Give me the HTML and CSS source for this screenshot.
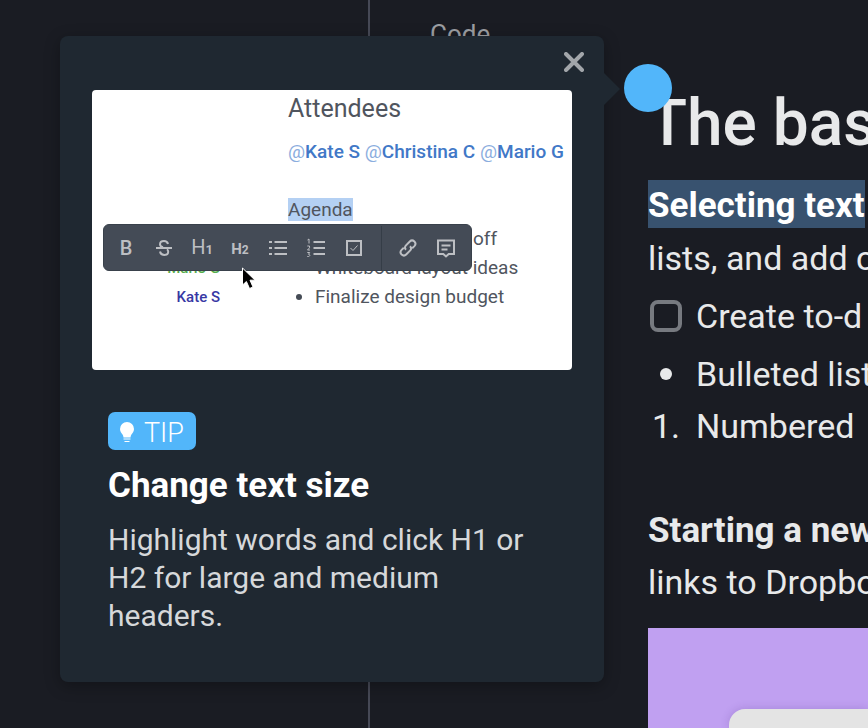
FILE: index.html
```html
<!DOCTYPE html>
<html lang="en">
<head>
<meta charset="utf-8">
<title>The basics</title>
<link rel="stylesheet" href="styles.css">
</head>
<body>
<div class="app">
  <aside class="sidebar"></aside>
  <nav class="outline"><a class="outline-link" href="#code">Code</a></nav>
  <main class="doc">
    <h1 class="doc-title">The bas</h1>
    <p class="line"><strong class="selected">Selecting text</strong></p>
    <p class="line">lists, and add c</p>
    <label class="line todo"><input class="todo-box" type="checkbox"><span>Create to-d</span></label>
    <ul class="items">
      <li class="line item"><span class="marker"><span class="dot"></span></span>Bulleted list</li>
    </ul>
    <ol class="items">
      <li class="line item"><span class="marker">1.</span>Numbered</li>
    </ol>
    <p class="line section"><strong>Starting a new</strong></p>
    <p class="line">links to Dropbo</p>
    <div class="figure"><div class="figure-panel"></div></div>
  </main>
</div>

<section class="popover" aria-labelledby="tip-title">
  <button class="close" type="button" aria-label="Close">
    <svg width="20" height="20" viewBox="0 0 20 20"><path d="M2 2L18 18M18 2L2 18"/></svg>
  </button>
  <div class="preview">
    <div class="authors">
      <span class="author green">Mario G</span>
      <span class="author">Kate S</span>
    </div>
    <div class="note">
      <h3 class="note-title">Attendees</h3>
      <p class="mentions"><i>@</i>Kate S <i>@</i>Christina C <i>@</i>Mario G</p>
      <p class="agenda"><mark>Agenda</mark></p>
      <ul class="note-list">
        <li class="behind">off</li>
        <li>Whiteboard layout ideas</li>
        <li>Finalize design budget</li>
      </ul>
    </div>
    <div class="toolbar">
      <button class="tool bold" type="button">B</button>
      <button class="tool" type="button" aria-label="Strikethrough">
        <svg viewBox="0 0 20 20"><path d="M2 10H18M14 6C13.500 4 12 3 10 3C7.500 3 6 4.500 6 6.300C6 8 7.300 8.800 9 9.300M6 13.500C6.500 15.800 8 17 10.200 17C12.700 17 14.200 15.600 14.200 13.800C14.200 12.600 13.700 11.800 13 11.300"/></svg>
      </button>
      <button class="tool" type="button">H<small>1</small></button>
      <button class="tool h2" type="button">H<small>2</small></button>
      <button class="tool" type="button" aria-label="Bulleted list">
        <svg viewBox="0 0 20 20"><path d="M6.500 4H19M6.500 10H19M6.500 16H19M1 4H4M1 10H4M1 16H4"/></svg>
      </button>
      <button class="tool" type="button" aria-label="Numbered list">
        <svg viewBox="0 0 20 20"><path d="M7.500 4H19M7.500 10H19M7.500 16H19"/><path class="fine" d="M1.500 2L3 1V5.500M1.300 8H3.500V9.800L1.500 12H4M1.300 14.500H3.700L2.500 16.300C4.500 16.300 4.300 19 1.300 18.500"/></svg>
      </button>
      <button class="tool" type="button" aria-label="To-do">
        <svg viewBox="0 0 20 20"><path d="M3 3H17V17H3Z"/><path class="fine" d="M6.500 10L9 12.500L13.500 7.500"/></svg>
      </button>
      <span class="divider"></span>
      <button class="tool" type="button" aria-label="Link">
        <svg viewBox="0 0 20 20"><path d="M8 11.800C6.600 10.400 6.700 8.700 8 7.400L11.800 3.500C13.100 2.200 15 2.200 16.400 3.500C17.700 4.900 17.700 6.800 16.400 8.100L14.200 10.200M12 8.200C13.400 9.600 13.300 11.300 12 12.600L8.200 16.500C6.900 17.800 5 17.800 3.600 16.500C2.300 15.100 2.300 13.200 3.600 11.900L5.800 9.800"/></svg>
      </button>
      <button class="tool" type="button" aria-label="Comment">
        <svg viewBox="0 0 20 20"><path d="M2 2.500H18V16H12.700L10 18.500L7.300 16H2ZM5.500 7.500H14.500M5.500 11.500H11.500"/></svg>
      </button>
    </div>
    <svg class="cursor" width="16" height="23" viewBox="0 0 16 23"><path d="M1.500 1V18L5.400 14.500L8.500 21.500L12 20L9 13.200H14Z"/></svg>
  </div>
  <div class="copy">
    <span class="badge"><svg width="14" height="21" viewBox="0 0 14 21"><path d="M7 0A7 7 0 0 1 14 7C14 9.700 12.500 10.900 11.300 12.800C10.800 13.700 10.700 14.500 10.500 15.500H3.500C3.300 14.500 3.200 13.700 2.700 12.800C1.500 10.900 0 9.700 0 7A7 7 0 0 1 7 0ZM3.500 16.500H10.500V17.500H3.500ZM4.500 19H9.500V20H4.500Z"/></svg>TIP</span>
    <h2 class="tip-title" id="tip-title">Change text size</h2>
    <p class="tip-text">Highlight words and click H1 or H2 for large and medium headers.</p>
  </div>
  <span class="beacon"></span>
</section>
</body>
</html>
```
FILE: styles.css
```css
* { box-sizing: border-box; }

body {
  margin: 0;
  background: #1a1c23;
  color: #e8e9ea;
  font-family: Roboto, "Liberation Sans", sans-serif;
  overflow: hidden;
}

h1, h2, h3, p, ul, ol { margin: 0; padding: 0; list-style: none; }

button { border: 0; padding: 0; background: none; font: inherit; color: inherit; }

.app {
  display: grid;
  grid-template-columns: 370px 278px minmax(0, 1fr);
  min-height: 100vh;
}

.sidebar { border-right: 2px solid #464956; }

.outline { padding: 18px 0 0 60px; }

.outline-link {
  color: #9c9ea2;
  font-size: 26px;
  font-weight: 400;
  line-height: 32px;
  text-decoration: none;
}

.doc {
  display: flex;
  flex-direction: column;
  height: 100vh;
  padding-top: 87px;
  overflow: hidden;
  white-space: nowrap;
}

.doc-title {
  margin-bottom: 19px;
  font-size: 64px;
  font-weight: 500;
  line-height: 74px;
}

.line { flex: none; font-size: 34px; line-height: 52px; height: 52px; }
.line strong { font-size: 35px; font-weight: 700; }

.line .selected {
  display: inline-block;
  background: #38526f;
  color: #fff;
  line-height: 52px;
  height: 48px;
  vertical-align: top;
}

.todo { display: flex; align-items: center; gap: 14px; margin: 6px 0; }

.todo-box {
  appearance: none;
  flex: none;
  width: 32px;
  height: 32px;
  margin: 0 0 0 2px;
  border: 4px solid #777a80;
  border-radius: 8px;
}

.item { display: flex; }
.marker { display: flex; flex: none; align-items: center; justify-content: center; width: 36px; margin-right: 12px; }
.dot { width: 12px; height: 12px; border-radius: 50%; background: #e8e9ea; }

.section { margin-top: 52px; }

.figure {
  flex: 1 0 100px;
  margin-top: 20px;
  padding: 81px 0 0 81px;
  background: #c0a0f1;
}

.figure-panel {
  height: 100%;
  border-top-left-radius: 16px;
  background: #e4e4e4;
  box-shadow: 0 0 10px rgba(60, 30, 120, 0.2);
}

.popover {
  position: absolute;
  top: 36px;
  left: 60px;
  width: 544px;
  padding: 54px 32px 47px;
  border-radius: 8px;
  background: #1f2831;
  box-shadow: 0 4px 16px rgba(0, 0, 0, 0.3);
}

.popover::after {
  content: "";
  position: absolute;
  top: 37px;
  left: 100%;
  width: 16px;
  height: 32px;
  background: #1f2831;
  clip-path: polygon(0 0, 100% 50%, 0 100%);
}

.beacon {
  position: absolute;
  top: 28px;
  left: calc(100% + 20px);
  width: 48px;
  height: 48px;
  border-radius: 50%;
  background: #52b6fa;
}

.close { position: absolute; top: 16px; right: 20px; width: 20px; height: 20px; }
.close svg { display: block; fill: none; stroke: #a2a6aa; stroke-width: 4; stroke-linecap: round; }

.preview {
  position: relative;
  display: grid;
  grid-template-columns: 128px 1fr;
  column-gap: 68px;
  height: 280px;
  border-radius: 4px;
  background: #fff;
  color: #50555e;
  overflow: hidden;
  white-space: nowrap;
}

.authors { display: flex; flex-direction: column; align-items: flex-end; padding-top: 164px; }
.author { color: #3838a4; font-size: 15px; font-weight: 500; line-height: 29px; }
.author.green { color: #55ad4d; }

.note { padding-top: 4px; font-size: 19px; line-height: 29px; }
.note-title { margin-bottom: 13px; font-size: 25px; font-weight: 400; line-height: 30px; }
.mentions { margin-bottom: 29px; color: #4178c7; font-weight: 500; }
.mentions i { color: #8badde; font-style: normal; font-weight: 400; }
.agenda mark { background: #b4d0f3; color: inherit; }
.note-list { padding-left: 27px; }
.note-list li { display: flex; align-items: center; }
.note-list li::before {
  content: "";
  width: 6px;
  height: 6px;
  margin: 0 13px 0 -19px;
  border-radius: 50%;
  background: #454b55;
}
.note-list .behind { padding-left: 158px; }

.toolbar {
  position: absolute;
  top: 134px;
  left: 11px;
  display: flex;
  align-items: center;
  width: 369px;
  height: 47px;
  padding: 1px 3px 0;
  border: 1px solid #39414b;
  border-radius: 6px;
  background: #444b56;
}

.tool {
  display: flex;
  align-items: baseline;
  justify-content: center;
  width: 38px;
  color: #bdbfc3;
  font-size: 20px;
  line-height: 24px;
}
.tool small { font-size: 13px; font-weight: 700; }
.tool.bold { font-weight: 500; }
.tool.h2 { font-size: 15px; font-weight: 700; padding-top: 3px; }
.tool.h2 small { font-size: 12px; }
.tool svg { width: 20px; height: 20px; fill: none; stroke: #bdbfc3; stroke-width: 2; }
.tool svg .fine { stroke-width: 1; }
.divider { align-self: stretch; width: 1px; margin: 0 7px 0 8px; background: #353d47; }

.cursor { position: absolute; top: 177px; left: 149px; fill: #000; stroke: #fff; stroke-width: 1; }

.copy { padding: 42px 16px 0; }

.badge {
  display: flex;
  align-items: center;
  gap: 10px;
  width: fit-content;
  height: 38px;
  padding: 3px 12px 0;
  border-radius: 7px;
  background: #52b6fa;
  color: #fff;
  font-size: 27px;
  font-weight: 300;
}
.badge svg { fill: #fff; }

.tip-title { margin: 14px 0 13px; color: #fff; font-size: 35px; font-weight: 700; line-height: 44px; }
.tip-text { color: #d6d8da; font-size: 30px; line-height: 38px; }
```
